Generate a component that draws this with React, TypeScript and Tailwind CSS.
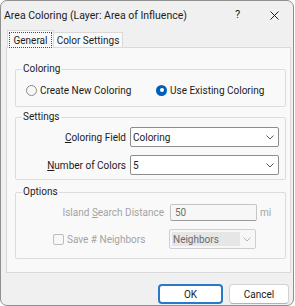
import React from 'react'

const FONT = "font-['Roboto',sans-serif]"

function Chevron({ color = '#5c5c5c' }: { color?: string }) {
  return (
    <svg width="8" height="5" viewBox="0 0 8 5" className="shrink-0">
      <path d="M0.5 0.5 L4 4 L7.5 0.5" fill="none" stroke={color} strokeWidth="1" />
    </svg>
  )
}

function Group({ title, className, children }: { title: string; className: string; children: React.ReactNode }) {
  return (
    <div className={`ml-[8px] w-[271px] border border-[#dcdcdc] rounded-[2px] flex flex-col ${className}`}>
      <div className="-mt-[7px] ml-[6px] w-fit h-[12px] px-[1px] bg-[#f9f9f9] leading-[12px]">{title}</div>
      {children}
    </div>
  )
}

function Radio({ checked, label, className = '' }: { checked?: boolean; label: string; className?: string }) {
  return (
    <div className={`flex items-center gap-[3px] ${className}`}>
      {checked ? (
        <span className="w-[11px] h-[11px] rounded-full bg-[#005fb8] flex items-center justify-center">
          <span className="w-[4px] h-[4px] rounded-full bg-white" />
        </span>
      ) : (
        <span className="w-[11px] h-[11px] rounded-full border border-[#8a8a8a] bg-[#f7f7f7]" />
      )}
      <span>{label}</span>
    </div>
  )
}

function Combo({ value }: { value: string }) {
  return (
    <div className="w-[149px] h-[20px] bg-white border border-[#8c8c8c] rounded-[2px] flex items-center pl-[2px] pr-[4px]">
      <span className="flex-1">{value}</span>
      <Chevron />
    </div>
  )
}

export default function App() {
  return (
    <div className={`w-[295px] h-[306px] bg-white text-[10px] text-[#1b1b1b] ${FONT}`}>
      <div className="w-[294px] h-[306px] border border-[#8f8f8f] rounded-[7px] bg-[#f0f0f0] flex flex-col">
        {/* title bar */}
        <div className="h-[29px] flex items-center pl-[3px] text-[10.5px]">
          <span>Area Coloring (Layer: Area of Influence)</span>
          <div className="ml-auto flex h-full">
            <div className="w-[37px] flex items-center justify-center text-[11px]">?</div>
            <div className="w-[37px] flex items-center justify-center">
              <svg width="9" height="9" viewBox="0 0 9 9">
                <path d="M0.5 0.5 L8.5 8.5 M8.5 0.5 L0.5 8.5" stroke="#1b1b1b" strokeWidth="1" />
              </svg>
            </div>
          </div>
        </div>

        {/* tabs */}
        <div className="h-[17px] flex items-end pl-[6px]">
          <div className="relative z-10 w-[47px] h-[18px] -mb-[1px] bg-[#f9f9f9] border border-b-0 border-[#d9d9d9] p-[1px] pb-0 flex">
            <span className="flex-1 border border-dotted border-[#4a4a4a] flex items-center justify-center">General</span>
          </div>
          <div className="w-[69px] h-[15px] bg-[#f9f9f9] border border-l-0 border-b-0 border-[#d9d9d9] flex items-center justify-center">
            Color Settings
          </div>
        </div>

        {/* tab page */}
        <div className="ml-[5px] w-[285px] h-[226px] bg-[#f9f9f9] border border-[#d9d9d9] flex flex-col">
          <Group title="Coloring" className="mt-[21px] h-[38px]">
            <div className="mt-[7px] h-[16px] flex items-center pl-[10px]">
              <Radio label="Create New Coloring" className="w-[130px]" />
              <Radio checked label="Use Existing Coloring" />
            </div>
          </Group>

          <Group title="Settings" className="mt-[10px] h-[63px]">
            <div className="mt-[4px] flex items-center gap-[4px]">
              <span className="w-[110px] text-right"><u>C</u>oloring Field</span>
              <Combo value="Coloring" />
            </div>
            <div className="mt-[8px] flex items-center gap-[4px]">
              <span className="w-[110px] text-right"><u>N</u>umber of Colors</span>
              <Combo value="5" />
            </div>
          </Group>

          <Group title="Options" className="mt-[12px] h-[67px]">
            <div className="mt-[6px] flex items-center text-[#a3a3a3]">
              <span className="w-[148px] text-right">Island <u>S</u>earch Distance</span>
              <div className="ml-[6px] w-[87px] h-[17px] bg-[#f7f7f7] border border-[#c4c4c4] border-b-[#9a9a9a] rounded-[2px] flex items-center pl-[4px] text-[#6f6f6f]">
                50
              </div>
              <span className="ml-[3px]">mi</span>
            </div>
            <div className="mt-[8px] flex items-center pl-[37px] text-[#a3a3a3]">
              <div className="w-[116px] flex items-center gap-[3px]">
                <span className="w-[11px] h-[11px] border border-[#bdbdbd] rounded-[2px] bg-[#f7f7f7]" />
                <span>Save # Neighbors</span>
              </div>
              <div className="w-[87px] h-[20px] bg-[#f7f7f7] border border-[#cfcfcf] rounded-[2px] flex items-center pl-[2px] pr-[4px]">
                <span className="w-[68px] h-[14px] bg-[#e6e6e6] flex items-center pl-[1px] text-[#6b6b6b]">Neighbors</span>
                <span className="flex-1" />
                <Chevron color="#b5b5b5" />
              </div>
            </div>
          </Group>
        </div>

        {/* buttons */}
        <div className="mt-[11px] flex justify-end gap-[6px] pr-[4px]">
          <button className="w-[65px] h-[20px] bg-white border-2 border-[#2a78c8] rounded-[4px] flex items-center justify-center">OK</button>
          <button className="w-[60px] h-[20px] bg-white border border-[#d2d2d2] border-b-[#b3b3b3] rounded-[4px] flex items-center justify-center">Cancel</button>
        </div>
      </div>
    </div>
  )
}
